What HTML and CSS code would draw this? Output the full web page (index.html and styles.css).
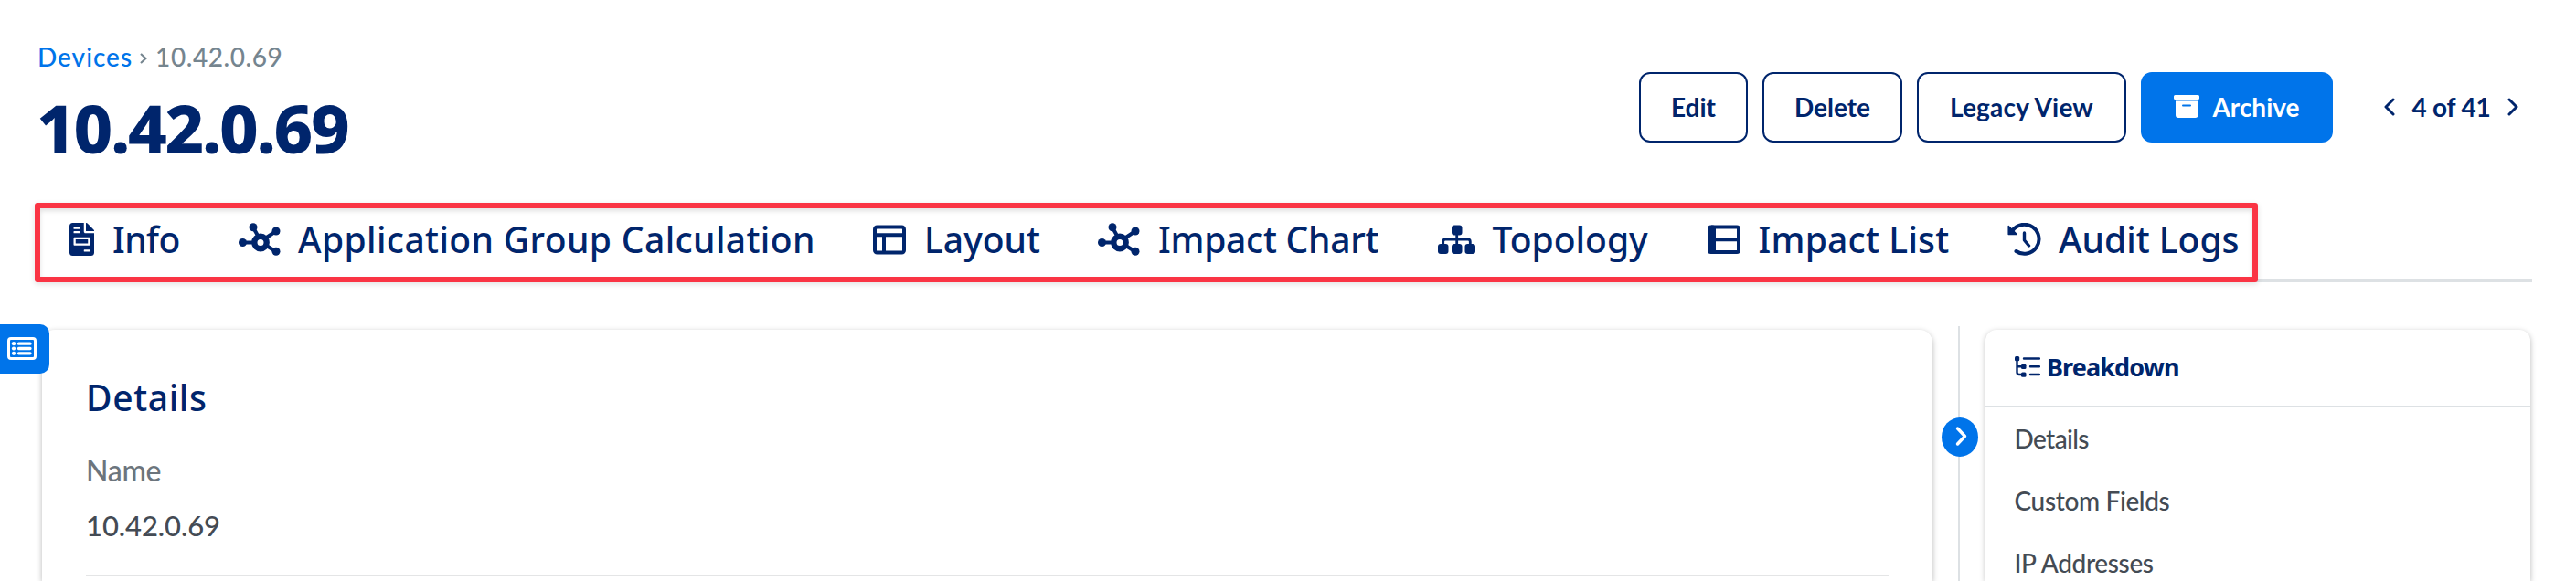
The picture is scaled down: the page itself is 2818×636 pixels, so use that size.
FILE: index.html
```html
<!DOCTYPE html>
<html lang="en">
<head>
<meta charset="utf-8">
<title>10.42.0.69</title>
<link rel="stylesheet" href="styles.css">
</head>
<body>
<svg class="defs" aria-hidden="true">
  <symbol id="hub" viewBox="0 0 46 36">
    <g stroke="currentColor" stroke-width="4" fill="none"><path d="M4.5 21.5H16M16 5l5 9M41 9L29 17M41 31.5L29 24"/></g>
    <circle cx="24" cy="21.5" r="6.7" fill="none" stroke="currentColor" stroke-width="6.4"/>
    <g fill="currentColor"><circle cx="4.5" cy="21.5" r="4.5"/><circle cx="16" cy="4.7" r="4.5"/><circle cx="41" cy="9" r="4.5"/><circle cx="41" cy="31.2" r="4.5"/></g>
  </symbol>
</svg>
<header class="header">
  <div class="heading">
    <nav class="crumbs"><a>Devices</a><svg class="crumb-sep" viewBox="0 0 8 14"><path d="M1 2l5.5 5L1 12"/></svg><span class="crumb-here">10.42.0.69</span></nav>
    <h1 class="title">10.42.0.69</h1>
  </div>
  <div class="actions">
    <button class="btn edit">Edit</button>
    <button class="btn delete">Delete</button>
    <button class="btn legacy">Legacy View</button>
    <button class="btn archive"><svg class="archive-icon" viewBox="0 0 28 25"><path fill="#fff" d="M1.5 0h25A1.5 1.5 0 0 1 28 1.5v2A1.5 1.5 0 0 1 26.500 5h-25A1.500 1.500 0 0 1 0 3.500v-2A1.500 1.500 0 0 1 1.500 0zM2 6.500h24.500V22a3 3 0 0 1-3 3H5a3 3 0 0 1-3-3z"/><path stroke="#0074ea" stroke-width="2" stroke-linecap="round" d="M10 11.500h8"/></svg><span>Archive</span></button>
    <div class="pager"><svg class="chev" viewBox="0 0 12 20"><path d="M10 2L2 10l8 8"/></svg><span>4 of 41</span><svg class="chev" viewBox="0 0 12 20"><path d="M2 2l8 8-8 8"/></svg></div>
  </div>
</header>

<nav class="tabs">
  <a class="tab info"><svg width="27" height="36" viewBox="0 0 384 512"><path fill="currentColor" d="M288 256H96v64h192v-64zm89-151L279.100 7c-4.500-4.500-10.600-7-17-7H256v128h128v-6.100c0-6.300-2.500-12.400-7-16.900zm-153 31V0H48C20 0 0 20 0 48v416c0 28 20 48 48 48h288c28 0 48-20 48-48V160H248c-13.200 0-24-10.800-24-24zM64 72c0-4.400 3.600-8 8-8h80c4.400 0 8 3.600 8 8v16c0 4.400-3.600 8-8 8H72c-4.400 0-8-3.600-8-8V72zm0 64c0-4.400 3.600-8 8-8h80c4.400 0 8 3.600 8 8v16c0 4.400-3.600 8-8 8H72c-4.400 0-8-3.600-8-8v-16zm256 304c0 4.400-3.600 8-8 8h-80c-4.400 0-8-3.600-8-8v-16c0-4.400 3.600-8 8-8h80c4.400 0 8 3.600 8 8v16zm0-200v96c0 8.800-7.200 16-16 16H80c-8.800 0-16-7.200-16-16v-96c0-8.800 7.200-16 16-16h224c8.800 0 16 7.200 16 16z"/></svg><span>Info</span></a>
  <a class="tab app"><svg width="46" height="36"><use href="#hub"/></svg><span>Application Group Calculation</span></a>
  <a class="tab layout"><svg width="36" height="36" viewBox="0 0 36 36"><g fill="none" stroke="currentColor" stroke-width="4"><rect x="2" y="4.500" width="32" height="28" rx="2.500"/><path d="M2 13.300h32M12 13v19"/></g></svg><span>Layout</span></a>
  <a class="tab chart"><svg width="46" height="36"><use href="#hub"/></svg><span>Impact Chart</span></a>
  <a class="tab topology"><svg width="41" height="36" viewBox="0 0 41 36"><g fill="currentColor"><rect x="15" y="2.500" width="11.500" height="11" rx="3"/><rect y="23" width="11.500" height="11" rx="3"/><rect x="15" y="23" width="11.500" height="11" rx="3"/><rect x="29.500" y="23" width="11.500" height="11" rx="3"/></g><path fill="none" stroke="currentColor" stroke-width="2.800" d="M5.700 24v-3.500q0-2.500 2.500-2.500h24.600q2.500 0 2.500 2.500V24M20.700 12v12"/></svg><span>Topology</span></a>
  <a class="tab list"><svg width="36" height="36" viewBox="0 0 36 36"><path fill="none" stroke="currentColor" stroke-width="4" d="M6 4.500h26q2 0 2 2v23.500q0 2-2 2H6zM8 18.300h26"/><rect y="2.500" width="9" height="31.500" rx="3.500" fill="currentColor"/></svg><span>Impact List</span></a>
  <a class="tab audit"><svg width="37" height="36" viewBox="0 0 37 36"><g fill="none" stroke="currentColor" stroke-width="4" stroke-linecap="round" stroke-linejoin="round"><path d="M5.500 8.500A16 16 0 1 1 9.500 31"/><path stroke-width="3.400" d="M18.500 11v8l5 6"/></g><path fill="currentColor" stroke="currentColor" stroke-width="1.500" stroke-linejoin="round" d="M1.200 3.500v9h9z"/></svg><span>Audit Logs</span></a>
  <div class="highlight"></div>
</nav>

<main class="content">
  <button class="drawer" aria-label="Menu"><svg width="32" height="25" viewBox="0 0 32 25"><rect x="1.500" y="1.500" width="29" height="22" rx="2.500" fill="none" stroke="#fff" stroke-width="3"/><g fill="#fff"><circle cx="7" cy="7.200" r="2.100"/><circle cx="7" cy="12.500" r="2.100"/><circle cx="7" cy="17.800" r="2.100"/></g><path stroke="#fff" stroke-width="3.300" stroke-linecap="round" d="M12.500 7.200h12.500M12.500 12.500h12.500M12.500 17.800h12.500"/></svg></button>
  <section class="card details">
    <h2 class="details-title">Details</h2>
    <div class="label">Name</div>
    <div class="value">10.42.0.69</div>
    <hr class="rule">
  </section>
  <div class="divider"><button class="collapse" aria-label="Collapse"><svg width="40" height="43" viewBox="0 0 40 43"><path d="M17.500 12l8 8.500-8 8.500"/></svg></button></div>
  <aside class="card breakdown">
    <h3 class="breakdown-title"><svg width="28" height="24" viewBox="0 0 28 24"><g fill="currentColor"><rect width="5.200" height="5.200" rx="1.500"/><rect x="7" y="8.700" width="5.500" height="5.200" rx="1.500"/><rect x="7" y="17.500" width="5.500" height="5.200" rx="1.500"/></g><path fill="none" stroke="currentColor" stroke-width="2.400" stroke-linecap="round" d="M10 2.500h17M17 11.300h10M17 20h10M2.500 3v14.500q0 2.500 2.500 2.500h4M2.500 11.300H9"/></svg><span>Breakdown</span></h3>
    <a class="item i1">Details</a>
    <a class="item i2">Custom Fields</a>
    <a class="item i3">IP Addresses</a>
  </aside>
</main>
</body>
</html>
```

FILE: styles.css
```css
* { box-sizing: border-box; margin: 0; padding: 0; }
body {
  height: 636px;
  overflow: hidden;
  background: #fff;
  color: #00256c;
  font-family: Lato, sans-serif;
}
svg { display: block; flex: none; }
.defs { position: absolute; width: 0; height: 0; }
button { font: inherit; color: inherit; border: 0; background: none; }

.header {
  display: flex;
  justify-content: space-between;
  align-items: flex-start;
  height: 222px;
  padding: 0 63px 0 41px;
}
.heading { padding-top: 45px; }
.crumbs {
  display: flex;
  align-items: center;
  height: 34px;
  font-size: 28px;
  font-weight: 500;
  line-height: 34px;
  color: #0074ea;
  letter-spacing: 1px;
}
.crumb-sep { width: 8px; height: 14px; margin: 4px 9px 0 8px; }
.crumb-sep path { fill: none; stroke: #75858f; stroke-width: 2.2; }
.crumb-here { color: #75858f; letter-spacing: .58px; }
.title {
  margin-top: 21px;
  margin-left: -1px;
  font: 800 74px/80px "Noto Sans", sans-serif;
  letter-spacing: -2.2px;
}

.actions {
  display: flex;
  align-items: center;
  gap: 16px;
  padding-top: 79px;
}
.btn {
  display: flex;
  align-items: center;
  justify-content: center;
  height: 77px;
  padding-bottom: 2px;
  border: 2px solid #00256c;
  border-radius: 12px;
  font-size: 28px;
  font-weight: 700;
  white-space: nowrap;
}
.edit { width: 119px; }
.delete { width: 153px; }
.legacy { width: 229px; letter-spacing: .2px; }
.archive {
  width: 210px;
  gap: 14px;
  background: #0074ea;
  border-color: #0074ea;
  color: #fff;
}
.archive-icon { width: 28px; height: 25px; }
.pager {
  display: flex;
  align-items: center;
  justify-content: space-between;
  width: 147px;
  margin-left: 40px;
  padding-bottom: 1px;
  font-size: 28px;
  font-weight: 700;
  letter-spacing: -.2px;
}
.chev { width: 12px; height: 20px; }
.chev path { fill: none; stroke: #00256c; stroke-width: 3; stroke-linecap: round; stroke-linejoin: round; }

.tabs {
  position: relative;
  display: grid;
  grid-template-columns: 185px 694px 246px 371.5px 295px 328.5px auto;
  align-items: center;
  width: 2728px;
  height: 87px;
  margin-left: 42px;
  padding-left: 34px;
  border-bottom: 4px solid #dde1e4;
}
.tab {
  display: flex;
  align-items: center;
  gap: 19px;
  height: 75px;
  padding-bottom: 4px;
  font: 500 39px/60px "Noto Sans", sans-serif;
  white-space: nowrap;
}
.tab span { padding-top: 1px; }
.info { gap: 20px; letter-spacing: -.6px; }
.app { letter-spacing: .38px; }
.layout { gap: 20px; }
.chart { gap: 20px; letter-spacing: -.28px; }
.list { gap: 20px; letter-spacing: .2px; }
.highlight {
  position: absolute;
  left: -4px;
  top: 0;
  width: 2432px;
  height: 87px;
  border: 6px solid #fa3444;
  border-radius: 3px;
  box-shadow: 0 2px 6px rgba(0, 0, 0, .12), inset 0 3px 5px rgba(0, 0, 0, .12);
}

.content {
  position: relative;
  display: flex;
  height: 327px;
  padding: 52px 0 0 46px;
  overflow: hidden;
}
.card {
  height: 275px;
  background: #fff;
  border-radius: 14px 14px 0 0;
  box-shadow: 0 2px 6px rgba(0, 0, 0, .28);
}
.drawer {
  position: absolute;
  left: 0;
  top: 46px;
  display: flex;
  align-items: center;
  width: 54px;
  height: 54px;
  padding: 0 0 2px 8px;
  background: #0074ea;
  border-radius: 0 10px 10px 0;
}
.details { width: 2068px; padding: 54px 48px 0; }
.details-title {
  font: 500 39px/40px "Noto Sans", sans-serif;
  letter-spacing: .63px;
}
.label {
  margin-top: 40px;
  font-size: 32px;
  font-weight: 500;
  line-height: 40px;
  color: #6c757d;
  letter-spacing: -.3px;
}
.value {
  margin-top: 20px;
  font-size: 31px;
  font-weight: 500;
  line-height: 40px;
  color: #444b54;
  letter-spacing: -.09px;
}
.rule { height: 2px; margin-top: 34px; border: 0; background: #e4e5e6; }

.divider {
  position: relative;
  width: 2px;
  height: 279px;
  margin: -4px 28px 0;
  background: #dde1e4;
}
.collapse { position: absolute; left: -18px; top: 100px; width: 40px; height: 43px; border-radius: 50%; background: #0074ea; }
.collapse path { fill: none; stroke: #fff; stroke-width: 3.4; stroke-linecap: round; stroke-linejoin: round; }

.breakdown { width: 596px; border-radius: 12px 12px 0 0; }
.breakdown-title {
  display: flex;
  align-items: center;
  gap: 7px;
  height: 85px;
  padding: 0 0 2px 32px;
  border-bottom: 2px solid #dde1e4;
  font: 700 27px/40px "Noto Sans", sans-serif;
  letter-spacing: -.88px;
}
.item {
  display: block;
  height: 68px;
  padding-left: 31.5px;
  font-size: 28px;
  font-weight: 500;
  line-height: 68px;
  color: #444b54;
  letter-spacing: -.35px;
}
.i1 { letter-spacing: -.6px; }
.i3 { height: 54px; }
```
